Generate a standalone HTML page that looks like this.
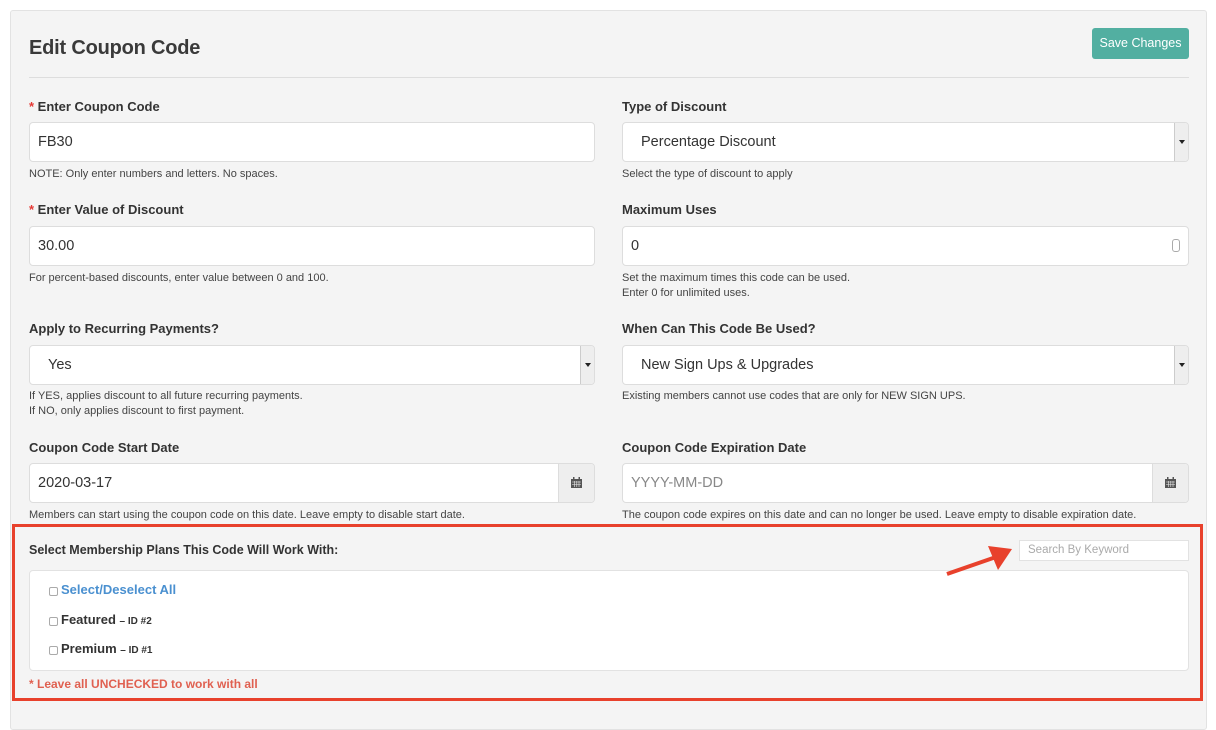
<!DOCTYPE html>
<html><head><style>
*{box-sizing:border-box;margin:0;padding:0}
body{width:1216px;height:715px;overflow:hidden;background:#fff;font-family:"Liberation Sans",sans-serif;color:#333;position:relative}
.panel{position:absolute;left:10px;top:10px;width:1197px;height:720px;background:#f4f4f4;border:1px solid #e2e2e2;border-radius:3px}
.a{position:absolute}
.lbl{font-size:13px;font-weight:bold;color:#333}
.note{font-size:11px;color:#444;line-height:15px}
.inp{position:absolute;height:40px;background:#fff;border:1px solid #ddd;border-radius:4px;font-size:14.5px;color:#333;padding:0 0 0 8px;line-height:38px}
.sel{padding-left:18px}
.caret{position:absolute;right:0;top:0;width:14px;height:38px;background:#eee;border-left:1px solid #ccc;border-radius:0 3px 3px 0}
.caret:after{content:"";position:absolute;left:4px;top:17px;border:3px solid transparent;border-top:4px solid #222}
.cal{position:absolute;right:0;top:0;width:36px;height:38px;background:#eee;border-left:1px solid #ddd;border-radius:0 3px 3px 0}
.star{color:#e53935}
.cb{display:inline-block;width:9px;height:9px;border:1px solid #aaa;border-radius:2px;background:#fff;vertical-align:-2px;margin-right:3px}
</style></head><body>
<div class="panel"></div>
<div class="a" style="left:29px;top:37px;font-size:20px;color:#3a3a3a;font-weight:bold;letter-spacing:-0.2px">Edit Coupon Code</div>
<div class="a" style="left:1092px;top:28px;width:97px;height:31px;background:#52afa1;border-radius:3px;color:#fff;font-size:12.5px;text-align:center;line-height:31px">Save Changes</div>
<div class="a" style="left:29px;top:77px;width:1160px;height:1px;background:#ddd"></div>

<div class="a lbl" style="left:29px;top:99px"><span class="star">*</span> Enter Coupon Code</div>
<div class="inp" style="left:29px;top:122px;width:566px">FB30</div>
<div class="a note" style="left:29px;top:167px">NOTE: Only enter numbers and letters. No spaces.</div>

<div class="a lbl" style="left:622px;top:99px">Type of Discount</div>
<div class="inp sel" style="left:622px;top:122px;width:567px">Percentage Discount<div class="caret"></div></div>
<div class="a note" style="left:622px;top:167px">Select the type of discount to apply</div>

<div class="a lbl" style="left:29px;top:202px"><span class="star">*</span> Enter Value of Discount</div>
<div class="inp" style="left:29px;top:226px;width:566px">30.00</div>
<div class="a note" style="left:29px;top:271px">For percent-based discounts, enter value between 0 and 100.</div>

<div class="a lbl" style="left:622px;top:202px">Maximum Uses</div>
<div class="inp" style="left:622px;top:226px;width:567px">0<span class="a" style="right:8px;top:12px;width:8px;height:13px;border:1px solid #aaa;border-radius:3px"></span></div>
<div class="a note" style="left:622px;top:271px">Set the maximum times this code can be used.<br>Enter 0 for unlimited uses.</div>

<div class="a lbl" style="left:29px;top:321px">Apply to Recurring Payments?</div>
<div class="inp sel" style="left:29px;top:345px;width:566px">Yes<div class="caret"></div></div>
<div class="a note" style="left:29px;top:389px">If YES, applies discount to all future recurring payments.<br>If NO, only applies discount to first payment.</div>

<div class="a lbl" style="left:622px;top:321px">When Can This Code Be Used?</div>
<div class="inp sel" style="left:622px;top:345px;width:567px">New Sign Ups &amp; Upgrades<div class="caret"></div></div>
<div class="a note" style="left:622px;top:389px">Existing members cannot use codes that are only for NEW SIGN UPS.</div>

<div class="a lbl" style="left:29px;top:440px">Coupon Code Start Date</div>
<div class="inp" style="left:29px;top:463px;width:566px">2020-03-17<div class="cal"><svg style="position:absolute;left:12px;top:13px" width="11" height="11" viewBox="0 0 11 11"><rect x="0" y="2" width="11" height="9" fill="#555"/><rect x="2" y="0" width="1.5" height="3" fill="#555"/><rect x="7.5" y="0" width="1.5" height="3" fill="#555"/><path d="M1 5h9M1 7.5h9M3.5 4v6M5.8 4v6M8 4v6" stroke="#eee" stroke-width=".6"/></svg></div></div>
<div class="a note" style="left:29px;top:508px">Members can start using the coupon code on this date. Leave empty to disable start date.</div>

<div class="a lbl" style="left:622px;top:440px">Coupon Code Expiration Date</div>
<div class="inp" style="left:622px;top:463px;width:567px;color:#888">YYYY-MM-DD<div class="cal"><svg style="position:absolute;left:12px;top:13px" width="11" height="11" viewBox="0 0 11 11"><rect x="0" y="2" width="11" height="9" fill="#555"/><rect x="2" y="0" width="1.5" height="3" fill="#555"/><rect x="7.5" y="0" width="1.5" height="3" fill="#555"/><path d="M1 5h9M1 7.5h9M3.5 4v6M5.8 4v6M8 4v6" stroke="#eee" stroke-width=".6"/></svg></div></div>
<div class="a note" style="left:622px;top:508px">The coupon code expires on this date and can no longer be used. Leave empty to disable expiration date.</div>

<div class="a" style="left:12px;top:524px;width:1191px;height:177px;border:3px solid #e8412c"></div>
<div class="a lbl" style="left:29px;top:543px;font-size:12.5px">Select Membership Plans This Code Will Work With:</div>
<div class="a" style="left:1019px;top:540px;width:170px;height:21px;background:#fff;border:1px solid #e2e2e2;font-size:11.5px;color:#aaa;padding-left:8px;line-height:19px">Search By Keyword</div>
<div class="a" style="left:29px;top:570px;width:1160px;height:101px;background:#fff;border:1px solid #e2e2e2;border-radius:4px"></div>
<svg class="a" style="left:940px;top:540px;overflow:visible" width="80" height="45"><line x1="7" y1="34" x2="56" y2="17" stroke="#e8412c" stroke-width="4"/><polygon points="72,9 48,6 58,30" fill="#e8412c"/></svg>
<div class="a" style="left:49px;top:582px;font-size:13px;font-weight:bold;color:#4a90d0"><span class="cb"></span>Select/Deselect All</div>
<div class="a" style="left:49px;top:612px;font-size:13px;font-weight:bold;color:#333"><span class="cb"></span>Featured <span style="font-size:10px">– ID #2</span></div>
<div class="a" style="left:49px;top:641px;font-size:13px;font-weight:bold;color:#333"><span class="cb"></span>Premium <span style="font-size:10px">– ID #1</span></div>
<div class="a" style="left:29px;top:677px;font-size:12px;font-weight:bold;color:#e06050">* Leave all UNCHECKED to work with all</div>
</body></html>
